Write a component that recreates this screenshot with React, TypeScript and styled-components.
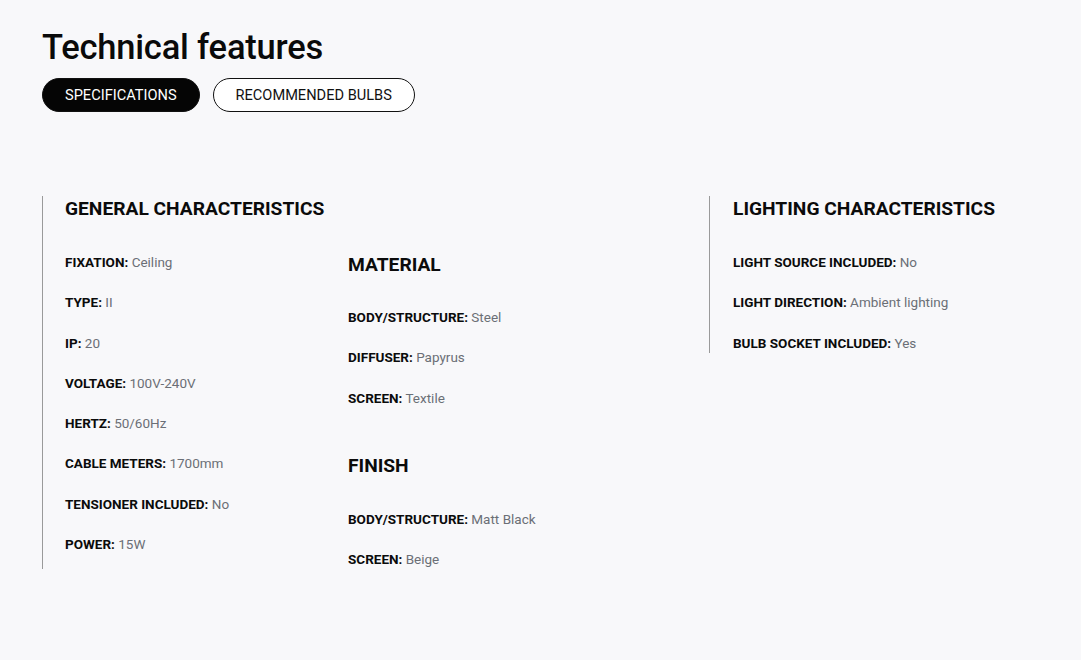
import React from "react";
import styled, { createGlobalStyle } from "styled-components";

const GlobalStyle = createGlobalStyle`
  html, body { margin: 0; padding: 0; background: #ffffff; }
  body { font-family: Roboto, "Liberation Sans", Arial, sans-serif; color: #0b0b0b; }
  * { box-sizing: border-box; }
`;

const Section = styled.section`
  background: #f8f8fa;
  height: 660px;
  padding: 25px 42px 0 42px;
`;

const Title = styled.h1`
  margin: 0;
  font-size: 34.5px;
  font-weight: 500;
  line-height: 44px;
  letter-spacing: -0.2px;
  color: #0a0a0a;
`;

const Tabs = styled.div`
  display: flex;
  gap: 13px;
  margin-top: 9px;
`;

const Tab = styled.button<{ $active?: boolean }>`
  height: 34px;
  padding: 0 22px;
  border-radius: 17px;
  border: 1px solid #111;
  background: ${(p) => (p.$active ? "#050505" : "#ffffff")};
  color: ${(p) => (p.$active ? "#ffffff" : "#111")};
  font-family: Roboto, "Liberation Sans", Arial, sans-serif;
  font-size: 14.6px;
  font-weight: 400;
  text-transform: uppercase;
  cursor: pointer;
`;

const Grid = styled.div`
  display: grid;
  grid-template-columns: 667px 1fr;
  margin-top: 84px;
  align-items: start;
`;

const Column = styled.div<{ $pad?: number }>`
  border-left: 1px solid #9a9a9a;
  padding-left: ${(p) => p.$pad ?? 22}px;
`;

const Heading = styled.h2`
  margin: 0;
  font-size: 19.2px;
  font-weight: 700;
  line-height: 26px;
  text-transform: uppercase;
  color: #0b0b0b;
`;

const Inner = styled.div`
  display: grid;
  grid-template-columns: 283px 1fr;
  margin-top: 30px;
`;

const List = styled.ul<{ $top?: number }>`
  list-style: none;
  margin: ${(p) => p.$top ?? 0}px 0 0 0;
  padding: 0;
  display: flex;
  flex-direction: column;
  gap: 20.3px;
`;

const Item = styled.li`
  font-size: 13.5px;
  line-height: 20px;
  color: #6b6f76;
`;

const Label = styled.span`
  font-weight: 700;
  color: #0b0b0b;
`;

const SubGroup = styled.div<{ $top?: number }>`
  margin-top: ${(p) => p.$top ?? 0}px;
`;

type Spec = [string, string];

const general: Spec[] = [
  ["FIXATION", "Ceiling"],
  ["TYPE", "II"],
  ["IP", "20"],
  ["VOLTAGE", "100V-240V"],
  ["HERTZ", "50/60Hz"],
  ["CABLE METERS", "1700mm"],
  ["TENSIONER INCLUDED", "No"],
  ["POWER", "15W"],
];

const material: Spec[] = [
  ["BODY/STRUCTURE", "Steel"],
  ["DIFFUSER", "Papyrus"],
  ["SCREEN", "Textile"],
];

const finish: Spec[] = [
  ["BODY/STRUCTURE", "Matt Black"],
  ["SCREEN", "Beige"],
];

const lighting: Spec[] = [
  ["LIGHT SOURCE INCLUDED", "No"],
  ["LIGHT DIRECTION", "Ambient lighting"],
  ["BULB SOCKET INCLUDED", "Yes"],
];

const SpecList = ({ items, top }: { items: Spec[]; top?: number }) => (
  <List $top={top}>
    {items.map(([k, v], i) => (
      <Item key={i}>
        <Label>{k}:</Label> {v}
      </Item>
    ))}
  </List>
);

export default function App() {
  return (
    <>
      <GlobalStyle />
      <Section>
        <Title>Technical features</Title>
        <Tabs>
          <Tab $active>Specifications</Tab>
          <Tab>Recommended bulbs</Tab>
        </Tabs>
        <Grid>
          <Column>
            <Heading>General characteristics</Heading>
            <Inner>
              <SpecList items={general} />
              <div>
                <SubGroup>
                  <Heading>Material</Heading>
                  <SpecList items={material} top={29} />
                </SubGroup>
                <SubGroup $top={45.4}>
                  <Heading>Finish</Heading>
                  <SpecList items={finish} top={30} />
                </SubGroup>
              </div>
            </Inner>
          </Column>
          <Column $pad={23}>
            <Heading>Lighting characteristics</Heading>
            <SpecList items={lighting} top={30} />
          </Column>
        </Grid>
      </Section>
    </>
  );
}
